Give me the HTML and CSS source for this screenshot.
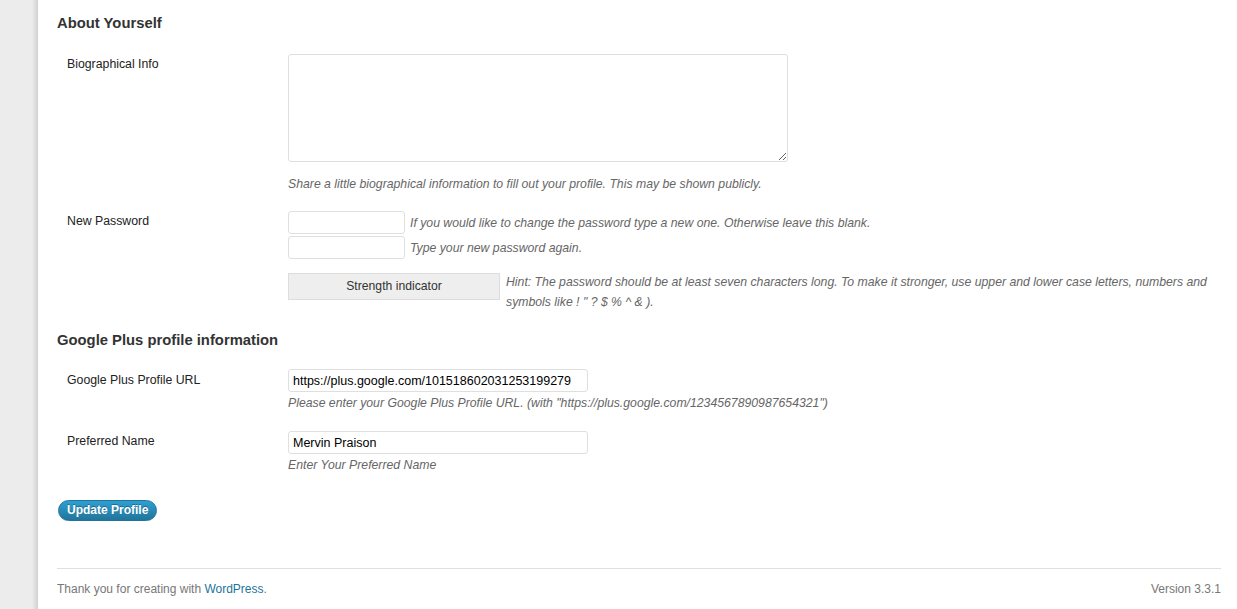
FILE: index.html
```html
<!DOCTYPE html>
<html lang="en">
<head>
<meta charset="utf-8">
<title>Profile</title>
<link rel="stylesheet" href="styles.css">
</head>
<body>
<div class="layout">
  <div class="sidebar"></div>
  <div class="content">
    <h3 class="section-title first">About Yourself</h3>
    <div class="form-row row-bio">
      <div class="label">Biographical Info</div>
      <div class="field">
        <textarea class="bio" rows="5"></textarea>
        <p class="description desc-bio">Share a little biographical information to fill out your profile. This may be shown publicly.</p>
      </div>
    </div>
    <div class="form-row row-pass">
      <div class="label">New Password</div>
      <div class="field">
        <div class="pass-line"><input class="pass" type="password"><span class="description">If you would like to change the password type a new one. Otherwise leave this blank.</span></div>
        <div class="pass-line second"><input class="pass" type="password"><span class="description">Type your new password again.</span></div>
        <div class="strength-row">
          <div class="strength">Strength indicator</div>
          <p class="description hint">Hint: The password should be at least seven characters long. To make it stronger, use upper and lower case letters, numbers and symbols like ! " ? $ % ^ &amp; ).</p>
        </div>
      </div>
    </div>

    <h3 class="section-title second-title">Google Plus profile information</h3>
    <div class="form-row row-gplus">
      <div class="label">Google Plus Profile URL</div>
      <div class="field">
        <input class="text" type="text" value="https://plus.google.com/101518602031253199279">
        <p class="description small">Please enter your Google Plus Profile URL. (with "https://plus.google.com/1234567890987654321")</p>
      </div>
    </div>
    <div class="form-row row-name">
      <div class="label">Preferred Name</div>
      <div class="field">
        <input class="text" type="text" value="Mervin Praison">
        <p class="description small">Enter Your Preferred Name</p>
      </div>
    </div>

    <div class="submit"><button class="button-primary" type="button">Update Profile</button></div>

    <footer class="footer">
      <span class="thanks">Thank you for creating with <a href="#">WordPress</a>.</span>
      <span class="version">Version 3.3.1</span>
    </footer>
  </div>
</div>
</body>
</html>
```

FILE: styles.css
```css
html, body {
  margin: 0;
  padding: 0;
  height: 100%;
}
body {
  font-family: "Liberation Sans", Arial, sans-serif;
  font-size: 13px;
  color: #333;
  background: #ececec;
  overflow: hidden;
}
.layout {
  display: flex;
  min-height: 609px;
}
.sidebar {
  width: 38px;
  flex: none;
  background: linear-gradient(to right, #ececec 0, #ececec 32px, #e2e2e2 34px, #d6d6d6 37px, #cfcfcf 38px);
}
.content {
  flex: 1;
  background: #fff;
  padding: 0 16px 0 19px;
  display: flex;
  flex-direction: column;
}
.section-title {
  margin: 0;
  font-size: 14.8px;
  font-weight: bold;
  color: #333;
  line-height: 18px;
}
.section-title.first {
  margin-top: 14px;
}
.section-title.second-title {
  margin-top: 19px;
}
.form-row {
  display: grid;
  grid-template-columns: 231px 1fr;
}
.label {
  padding-left: 10px;
  font-size: 12.3px;
  color: #222;
  line-height: 17px;
}
.field {
  display: flex;
  flex-direction: column;
  align-items: flex-start;
}
.row-bio {
  margin-top: 22px;
}
.row-bio .label {
  padding-top: 2px;
}
textarea.bio {
  width: 500px;
  height: 108px;
  box-sizing: border-box;
  border: 1px solid #dfdfdf;
  border-radius: 3px;
  margin: 0;
  padding: 3px;
  font-family: inherit;
  font-size: 13px;
  resize: vertical;
  display: block;
}
.description {
  margin: 0;
  font-style: italic;
  font-size: 12.25px;
  color: #666;
  line-height: 16px;
}
.desc-bio {
  margin-top: 14px;
}
.row-pass {
  margin-top: 19px;
}
.row-pass .label {
  padding-top: 2px;
}
.pass-line {
  display: flex;
  align-items: center;
  height: 23px;
}
.pass-line.second {
  margin-top: 2px;
}
input.pass {
  width: 117px;
  height: 23px;
  box-sizing: border-box;
  border: 1px solid #dfdfdf;
  border-radius: 3px;
  margin: 0 5px 0 0;
  padding: 2px 4px;
  background: #fff;
}
.strength-row {
  display: flex;
  align-items: flex-start;
  margin-top: 14px;
}
.strength {
  width: 212px;
  height: 27px;
  box-sizing: border-box;
  flex: none;
  background: #eee;
  border: 1px solid #ddd;
  text-align: center;
  font-size: 12.2px;
  color: #333;
  line-height: 25px;
}
.hint {
  margin-left: 6px;
  line-height: 20px;
  margin-top: -1px;
  max-width: 712px;
}
.row-gplus {
  margin-top: 20px;
}
.row-gplus .label {
  padding-top: 3px;
}
.row-name .label {
  padding-top: 2px;
}
input.text {
  width: 300px;
  height: 23px;
  box-sizing: border-box;
  border: 1px solid #dfdfdf;
  border-radius: 3px;
  margin: 0;
  padding: 2px 4px;
  font-family: inherit;
  font-size: 12.5px;
  color: #000;
  background: #fff;
}
.description.small {
  margin-top: 3px;
}
.row-name {
  margin-top: 20px;
}
.submit {
  margin-top: 27px;
}
.button-primary {
  font-family: inherit;
  font-size: 12px;
  font-weight: bold;
  color: #fff;
  text-shadow: rgba(0, 0, 0, 0.3) 0 -1px 0;
  background: linear-gradient(to bottom, #2e9fd2 0, #21759b 100%);
  border: 1px solid #21759b;
  border-radius: 11px;
  height: 21px;
  padding: 0 8px;
  margin-left: 1px;
  line-height: 19px;
  white-space: nowrap;
  cursor: pointer;
}
.footer {
  margin-top: 47px;
  border-top: 1px solid #dfdfdf;
  display: flex;
  justify-content: space-between;
  padding-top: 13px;
  font-size: 12px;
  color: #777;
  line-height: 15px;
}
.footer a {
  color: #21759b;
  text-decoration: none;
}
```
